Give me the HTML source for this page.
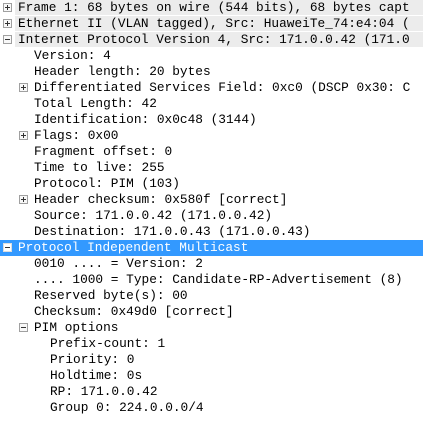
<!DOCTYPE html>
<html><head><style>
body{margin:0;width:423px;height:429px;overflow:hidden;background:#fff;font-family:"Liberation Mono",monospace;font-size:12.8px;color:#000}
.r{position:relative;height:16px;line-height:16px;white-space:nowrap}
.r span.t{position:absolute;top:0}
.h .t{left:15px;right:0;padding-left:3px;background:#ececec;height:15px}
.s{background:#3399ff;color:#fff}
.b{position:absolute;top:3px;width:7px;height:7px;border:1px solid #a0a0a0;background:#f8f8f8}
.b::before{content:"";position:absolute;left:1px;top:3px;width:5px;height:1px;background:#333}
.p::after{content:"";position:absolute;left:3px;top:1px;width:1px;height:5px;background:#333}
.s .b{border-color:#ddd;background:#fff}
</style></head><body>
<div class="r h"><i class="b p" style="left:3px"></i><span class="t">Frame 1: 68 bytes on wire (544 bits), 68 bytes capt</span></div>
<div class="r h"><i class="b p" style="left:3px"></i><span class="t">Ethernet II (VLAN tagged), Src: HuaweiTe_74:e4:04 (</span></div>
<div class="r h"><i class="b" style="left:3px"></i><span class="t">Internet Protocol Version 4, Src: 171.0.0.42 (171.0</span></div>
<div class="r"><span class="t" style="left:34px">Version: 4</span></div>
<div class="r"><span class="t" style="left:34px">Header length: 20 bytes</span></div>
<div class="r"><i class="b p" style="left:19px"></i><span class="t" style="left:34px">Differentiated Services Field: 0xc0 (DSCP 0x30: C</span></div>
<div class="r"><span class="t" style="left:34px">Total Length: 42</span></div>
<div class="r"><span class="t" style="left:34px">Identification: 0x0c48 (3144)</span></div>
<div class="r"><i class="b p" style="left:19px"></i><span class="t" style="left:34px">Flags: 0x00</span></div>
<div class="r"><span class="t" style="left:34px">Fragment offset: 0</span></div>
<div class="r"><span class="t" style="left:34px">Time to live: 255</span></div>
<div class="r"><span class="t" style="left:34px">Protocol: PIM (103)</span></div>
<div class="r"><i class="b p" style="left:19px"></i><span class="t" style="left:34px">Header checksum: 0x580f [correct]</span></div>
<div class="r"><span class="t" style="left:34px">Source: 171.0.0.42 (171.0.0.42)</span></div>
<div class="r"><span class="t" style="left:34px">Destination: 171.0.0.43 (171.0.0.43)</span></div>
<div class="r s"><i class="b" style="left:3px"></i><span class="t" style="left:18px">Protocol Independent Multicast</span></div>
<div class="r"><span class="t" style="left:34px">0010 .... = Version: 2</span></div>
<div class="r"><span class="t" style="left:34px">.... 1000 = Type: Candidate-RP-Advertisement (8)</span></div>
<div class="r"><span class="t" style="left:34px">Reserved byte(s): 00</span></div>
<div class="r"><span class="t" style="left:34px">Checksum: 0x49d0 [correct]</span></div>
<div class="r"><i class="b" style="left:19px"></i><span class="t" style="left:34px">PIM options</span></div>
<div class="r"><span class="t" style="left:50px">Prefix-count: 1</span></div>
<div class="r"><span class="t" style="left:50px">Priority: 0</span></div>
<div class="r"><span class="t" style="left:50px">Holdtime: 0s</span></div>
<div class="r"><span class="t" style="left:50px">RP: 171.0.0.42</span></div>
<div class="r"><span class="t" style="left:50px">Group 0: 224.0.0.0/4</span></div>
</body></html>
